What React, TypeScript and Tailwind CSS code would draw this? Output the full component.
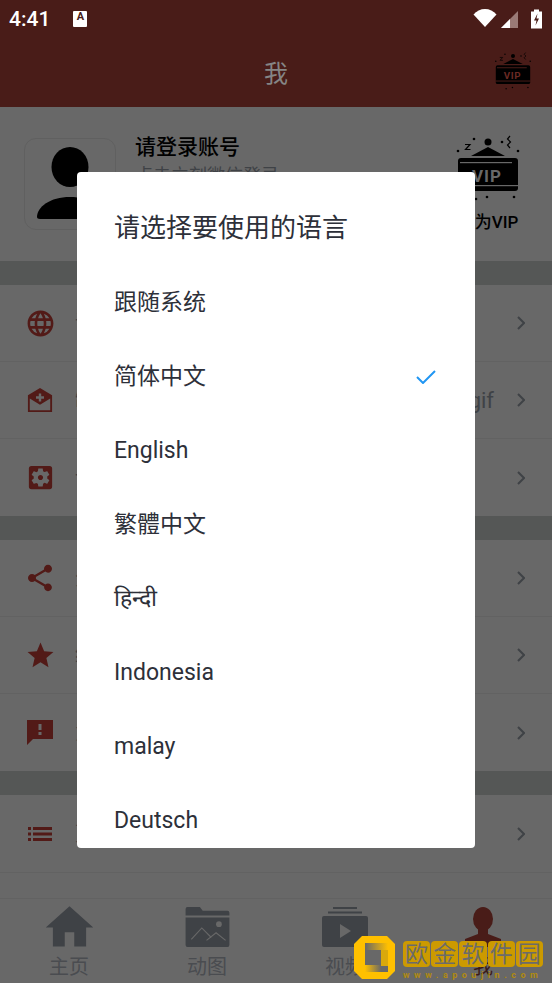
import React from 'react';
import { MdLanguage, MdSettingsApplications, MdShare, MdStar, MdHome } from 'react-icons/md';

const ChevronIcon = () => (
  <svg width="8" height="14" viewBox="0 0 8 14" fill="none" className="shrink-0">
    <path d="M1 1l6 6-6 6" stroke="#3f4246" strokeWidth="2" />
  </svg>
);

// open envelope with a plus on the flap
const MailPlusIcon = () => (
  <svg width="26" height="26" viewBox="0 0 28 28">
    <path d="M14 1 1 9v18h26V9L14 1zm-1.300 6h2.600v3h3v2.600h-3v3h-2.600v-3h-3V10h3V7zM3 12.500 14 19l11-6.500V25H3V12.500z" fill="#521a17" fillRule="evenodd" />
  </svg>
);

const FeedbackIcon = () => (
  <svg width="26" height="25" viewBox="0 0 26 25">
    <path d="M0 0h26v19H6l-6 6zm11.500 4v6h3V4zm0 8v3h3v-3z" fill="#521a17" fillRule="evenodd" />
  </svg>
);

const ListIcon = () => (
  <svg width="24" height="14" viewBox="0 0 24 14" fill="#521a17">
    <rect x="0" y="0" width="3" height="3" />
    <rect x="5" y="0" width="19" height="3" />
    <rect x="0" y="5.500" width="3" height="3" />
    <rect x="5" y="5.500" width="19" height="3" />
    <rect x="0" y="11" width="3" height="3" />
    <rect x="5" y="11" width="19" height="3" />
  </svg>
);

const VipIcon = ({ text, className }: { text: string; className: string }) => (
  <svg viewBox="0 0 64 68" className={className}>
    <circle cx="32" cy="7" r="3.500" fill="#000" />
    <circle cx="18" cy="4" r="1.300" fill="#000" />
    <circle cx="46" cy="7" r="1.300" fill="#000" />
    <circle cx="2" cy="16" r="1.300" fill="#000" />
    <circle cx="62" cy="16" r="1.300" fill="#000" />
    <path d="M9 9.500h5l-4.500 5h5" stroke="#000" strokeWidth="1.200" fill="none" />
    <path d="M54 1l-2.500 3 3 3-3 3 2.500 3" stroke="#000" strokeWidth="1.200" fill="none" />
    <path d="M15 21 32 12l17 9z" fill="#000" />
    <rect x="2" y="23" width="60" height="33" rx="3" fill="#000" />
    <rect x="4" y="27" width="52" height="1.200" fill={text} />
    <rect x="2" y="50" width="60" height="1.200" fill={text} />
    <text x="31" y="47" textAnchor="middle" fontSize="17" fontWeight="700" letterSpacing="1" fontFamily="Roboto, sans-serif" fill={text}>VIP</text>
    <circle cx="20" cy="64" r="1.300" fill="#000" />
    <circle cx="31" cy="62" r="1.300" fill="#000" />
    <circle cx="58" cy="62" r="1.300" fill="#000" />
  </svg>
);

const PersonIcon = () => (
  <svg viewBox="0 0 70 72" className="h-[72px] w-[70px]">
    <ellipse cx="35" cy="20" rx="18.500" ry="20" fill="#000" />
    <path d="M2 70c0-10 13-20 33-20s33 10 33 20c0 1-1 2-3 2H5c-2 0-3-1-3-2z" fill="#000" />
  </svg>
);

const rows = [
  [
    { label: '语言设置', icon: <MdLanguage size={31} color="#521a17" /> },
    { label: '制作', icon: <MailPlusIcon />, value: 'gif' },
    { label: '设置', icon: <MdSettingsApplications size={31} color="#521a17" /> },
  ],
  [
    { label: '分享', icon: <MdShare size={32} color="#521a17" /> },
    { label: '给个好评', icon: <MdStar size={31} color="#521a17" /> },
    { label: '意见反馈', icon: <FeedbackIcon /> },
  ],
  [{ label: '更多', icon: <ListIcon /> }],
];

const languages = ['跟随系统', '简体中文', 'English', '繁體中文', 'हिन्दी', 'Indonesia', 'malay', 'Deutsch'];

const Row = ({ label, icon, value }: { label: string; icon: React.ReactNode; value?: string }) => (
  <div className="flex h-[77px] items-center border-b border-[#626262] pl-[24px] pr-[27px] last:border-b-0">
    <div className="flex w-[32px] justify-center">{icon}</div>
    <span className="ml-[19px] flex-1 text-[20px] text-[#3f4246]">{label}</span>
    {value && <span className="mr-[23px] text-[22px] text-[#3f4246]">{value}</span>}
    <ChevronIcon />
  </div>
);

const NavItem = ({ label, icon, color }: { label: string; icon: React.ReactNode; color: string }) => (
  <div className="flex w-[138px] flex-col items-center">
    <div className="flex h-[48px] items-end">{icon}</div>
    <span className="mt-[6px] text-[20px] leading-[28px]" style={{ color }}>{label}</span>
  </div>
);

export default function App() {
  return (
    <div className="relative flex h-[983px] w-[552px] flex-col overflow-hidden bg-[#686868] font-['Roboto','Noto_Sans_CJK_SC',sans-serif]">
      {/* status bar + title */}
      <div className="h-[107px] shrink-0 bg-[#491c18]">
        <div className="flex h-[40px] items-center pl-[9px] pr-[10px] text-white">
          <span className="text-[21px] font-medium">4:41</span>
          <div className="mb-[2px] ml-[23px] flex h-[16px] w-[14px] items-start justify-center rounded-[1px] bg-white text-[11px] font-bold leading-[12px] text-[#491c18]">A</div>
          <div className="flex-1" />
          <svg width="24" height="18" viewBox="0 0 23 18" className="mb-[4px]">
            <path d="M0 5.500C3 2 7 0 11.500 0S20 2 23 5.500L11.500 18z" fill="#fff" />
          </svg>
          <svg width="17" height="18" viewBox="0 0 17 18" className="mb-[2px] ml-[4px]">
            <path d="M0 18 17 1v17z" fill="#9a7a76" />
            <path d="M0 18 9 9v9z" fill="#fff" />
          </svg>
          <svg width="11" height="20" viewBox="0 0 11 19" className="mb-[2px] ml-[13px]">
            <path d="M3 0h5v2h3v17H0V2h3z" fill="#fff" />
            <path d="M6.500 4 3 11h2.500L4.500 16 8 9H5.500z" fill="#491c18" />
          </svg>
        </div>
        <div className="flex h-[67px] items-center pr-[19px]">
          <span className="flex-1 pl-[59px] text-center text-[24px] leading-[64px] text-[#858585]">我</span>
          <div className="mb-[4px]"><VipIcon text="#6b2a24" className="h-[39px] w-[40px]" /></div>
        </div>
      </div>

      {/* profile */}
      <div className="flex h-[154px] shrink-0 items-center pl-[24px] pr-[32px]">
        <div className="flex h-[92px] w-[92px] items-end justify-center rounded-[12px] border border-[#606060] pb-[10px]">
          <PersonIcon />
        </div>
        <div className="ml-[19px] flex-1 self-start pt-[23px]">
          <div className="text-[21px] font-medium leading-[34px] text-black">请登录账号</div>
          <div className="text-[18px] leading-[24px] text-[#3f4246]">点击立刻微信登录</div>
        </div>
        <div className="flex flex-col items-center self-start pt-[28px]">
          <VipIcon text="#686868" className="h-[68px] w-[64px]" />
          <span className="mt-[7px] text-[17px] font-medium text-black">成为VIP</span>
        </div>
      </div>

      {rows.map((section, i) => (
        <div key={i} className="shrink-0">
          <div className="h-[24px] bg-[#555756]" />
          {section.map(r => <Row key={r.label} {...r} />)}
        </div>
      ))}

      <div className="flex-1 border-t border-[#626262]" />

      {/* bottom tabs */}
      <div className="flex h-[85px] shrink-0 border-t border-[#626262]">
        <NavItem label="主页" color="#4a4c50" icon={<MdHome size={57} color="#3f4246" className="-mb-[9px]" />} />
        <NavItem
          label="动图"
          color="#4a4c50"
          icon={
            <svg width="45" height="40" viewBox="0 0 46 42">
              <path d="M2 0h13l3 4h26a2 2 0 0 1 2 2v3H0V2a2 2 0 0 1 2-2z" fill="#3f4246" />
              <path d="M0 11h46v29a2 2 0 0 1-2 2H2a2 2 0 0 1-2-2z" fill="#3f4246" />
              <circle cx="35" cy="18" r="3" fill="#686868" />
              <path d="M6 34 17 22l10 10m-5 3 10-8 10 8" stroke="#686868" strokeWidth="1.200" fill="none" />
            </svg>
          }
        />
        <NavItem
          label="视频"
          color="#4a4c50"
          icon={
            <svg width="46" height="40" viewBox="0 0 46 40">
              <rect x="11" y="0" width="24" height="2" fill="#3f4246" />
              <rect x="6" y="4.500" width="34" height="2" fill="#3f4246" />
              <rect x="0" y="9" width="46" height="31" rx="2" fill="#3f4246" />
              <path d="M18 17v14l11-7z" fill="#686868" />
            </svg>
          }
        />
        <NavItem
          label="我"
          color="#3a1a18"
          icon={
            <svg width="40" height="40" viewBox="0 0 40 40">
              <ellipse cx="20" cy="12" rx="10" ry="12" fill="#491c18" />
              <path d="M15 20h10v7l13 5v8H2v-8l13-5z" fill="#491c18" />
            </svg>
          }
        />
      </div>

      {/* language dialog */}
      <div className="absolute left-[77px] top-[172px] h-[676px] w-[398px] overflow-hidden rounded-[4px] bg-white text-[#2d3039]">
        <div className="flex h-[94px] items-center pl-[37px] pt-[17px] text-[26px] leading-[36px]">请选择要使用的语言</div>
        {languages.map((lang, i) => (
          <div key={lang} className="flex h-[74px] items-center pl-[37px] pr-[39px] text-[23px]">
            <span className="flex-1">{lang}</span>
            {i === 1 && (
              <svg width="20" height="14" viewBox="0 0 20 14" fill="none">
                <path d="M1 7l6 6L19 1" stroke="#2196f3" strokeWidth="2" />
              </svg>
            )}
          </div>
        ))}
      </div>

      {/* site watermark */}
      <div className="absolute left-[354px] top-[936px] flex">
        <svg width="41" height="43" viewBox="0 0 41 43">
          <defs>
            <linearGradient id="wmTop" x1="0" x2="1" y1="0" y2="0">
              <stop offset="0" stopColor="#686868" />
              <stop offset="1" stopColor="#ffc000" />
            </linearGradient>
            <linearGradient id="wmBottom" x1="1" x2="0" y1="0" y2="0">
              <stop offset="0" stopColor="#686868" />
              <stop offset="1" stopColor="#ffc000" />
            </linearGradient>
          </defs>
          <path d="M8 0h25l8 8v27l-8 8H8l-8-8V8zM11 7v29h23V7z" fill="#ffc000" fillRule="evenodd" />
          <path d="M11 7h23v7H11z" fill="url(#wmTop)" />
          <path d="M27 14h7v16h-7z" fill="#d9a80c" />
          <path d="M11 29h16v7H11z" fill="url(#wmBottom)" />
        </svg>
        <div className="ml-[8px] flex flex-col">
          <div className="mt-[5px] flex gap-[1px]">
            {['欧', '金', '软', '件', '园'].map(c => (
              <span key={c} className="flex h-[26px] w-[27.200px] items-center justify-center rounded-[4px] bg-[#cc9a00] text-[23px] leading-none text-[#6b6b6b]">{c}</span>
            ))}
          </div>
          <span className="mt-[3px] text-[9px] font-bold leading-[10px] tracking-[4.500px] text-[#b08a10]">www.apoujin.com</span>
        </div>
      </div>
    </div>
  );
}
